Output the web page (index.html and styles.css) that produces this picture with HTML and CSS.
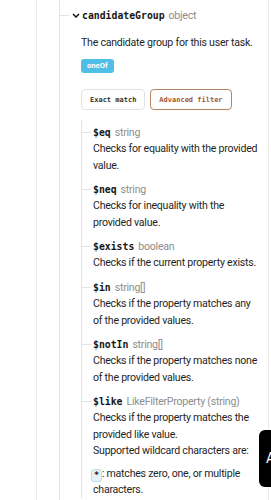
FILE: index.html
```html
<!DOCTYPE html>
<html lang="en">
<head>
<meta charset="utf-8">
<title>candidateGroup</title>
<link rel="stylesheet" href="styles.css">
</head>
<body>
<div class="outer">
  <div class="tree">
    <div class="prop">
      <div class="prop-head">
        <span class="dash"></span>
        <svg class="chev" width="8" height="5" viewBox="0 0 8 5"><path d="M1 1 L4 4 L7 1" fill="none" stroke="#161616" stroke-width="1.5"/></svg>
        <span class="name">candidateGroup</span>
        <span class="type">object</span>
      </div>
      <div class="prop-body">
        <p class="desc">The candidate group for this user task.</p>
        <span class="badge">oneOf</span>
        <div class="tabs">
          <span class="tab">Exact match</span>
          <span class="tab tab-active">Advanced filter</span>
        </div>
        <ul class="sublist">
          <li class="item">
            <div class="item-head"><span class="dash"></span><span class="name">$eq</span><span class="type">string</span></div>
            <p class="desc">Checks for equality with the provided value.</p>
          </li>
          <li class="item">
            <div class="item-head"><span class="dash"></span><span class="name">$neq</span><span class="type">string</span></div>
            <p class="desc">Checks for inequality with the provided value.</p>
          </li>
          <li class="item">
            <div class="item-head"><span class="dash"></span><span class="name">$exists</span><span class="type">boolean</span></div>
            <p class="desc">Checks if the current property exists.</p>
          </li>
          <li class="item">
            <div class="item-head"><span class="dash"></span><span class="name">$in</span><span class="type">string[]</span></div>
            <p class="desc">Checks if the property matches any of the provided values.</p>
          </li>
          <li class="item">
            <div class="item-head"><span class="dash"></span><span class="name">$notIn</span><span class="type">string[]</span></div>
            <p class="desc">Checks if the property matches none of the provided values.</p>
          </li>
          <li class="item">
            <div class="item-head"><span class="dash"></span><span class="name">$like</span><span class="type">LikeFilterProperty (string)</span></div>
            <p class="desc">Checks if the property matches the provided like value.<br>Supported wildcard characters are:</p>
            <p class="desc desc-gap"><code class="code">*</code>: matches zero, one, or multiple characters.</p>
          </li>
        </ul>
      </div>
    </div>
  </div>
</div>
<div class="float-btn">A</div>
</body>
</html>
```
FILE: styles.css
```css
* { box-sizing: border-box; }
html, body { margin: 0; padding: 0; background: #fff; }
body {
  font-family: Roboto, "Noto Sans", sans-serif;
  color: #161616;
  width: 271px;
  height: 500px;
  overflow: hidden;
}
.outer {
  margin-left: 36px;
  width: 233px;
  min-height: 500px;
  border-left: 1px solid #ececec;
  border-right: 1px solid #ececec;
  padding-left: 22px;
  padding-right: 7px;
}
.tree {
  border-left: 1px solid #e4e4e4;
  min-height: 500px;
  padding-top: 6px;
}
.prop-head {
  display: flex;
  align-items: center;
  height: 18px;
}
.dash {
  width: 9px;
  height: 1px;
  background: #e4e4e4;
  flex: none;
}
.chev { margin-left: 3px; margin-right: 2px; flex: none; }
.name {
  font-family: "DejaVu Sans Mono", monospace;
  font-weight: bold;
  font-size: 9.8px;
  color: #161616;
}
.type {
  font-size: 10.6px;
  letter-spacing: -0.25px;
  color: #8d8d8d;
  margin-left: 4px;
}
.prop-body { padding-left: 21px; }
.desc {
  margin: 0;
  font-size: 10.6px;
  letter-spacing: -0.25px;
  line-height: 16.25px;
  color: #1f1f1f;
}
.prop-body > .desc { margin-top: 11px; }
.badge {
  display: inline-block;
  margin-top: 8px;
  height: 14px;
  line-height: 14px;
  padding: 0 6px;
  background: #4fbfe6;
  color: #fff;
  font-weight: bold;
  font-size: 7.6px;
  border-radius: 3px;
  vertical-align: top;
}
.tabs {
  display: flex;
  gap: 5px;
  margin-top: 16px;
}
.tab {
  display: inline-flex;
  align-items: center;
  height: 21px;
  padding: 0 8px;
  border: 1px solid #e2e2e2;
  border-radius: 4px;
  font-family: "DejaVu Sans Mono", monospace;
  font-weight: bold;
  font-size: 7px;
  color: #333;
}
.tab-active {
  border-color: #b58461;
  color: #a0582c;
}
.sublist {
  list-style: none;
  margin: 10px 0 0 0;
  padding: 4px 0 0 0;
  border-left: 1px solid #e4e4e4;
}
.item + .item { margin-top: 7.6px; }
.item-head {
  display: flex;
  align-items: center;
  height: 17px;
}
.item-head .dash { margin-right: 2px; }
.item .desc { padding-left: 11px; }
.desc-gap { margin-top: 7px; }
.code {
  font-family: "DejaVu Sans Mono", monospace;
  font-size: 8.5px;
  font-weight: bold;
  display: inline-block;
  padding: 0 2px;
  margin-left: -2px;
  line-height: 11px;
  background: #e8f3f8;
  border: 1px solid #bcdbe8;
  border-radius: 3px;
  vertical-align: -1px;
}
.float-btn {
  position: fixed;
  left: 259px;
  top: 430px;
  width: 30px;
  height: 57px;
  background: #000;
  border-radius: 6px;
  color: #fff;
  font-family: Roboto, sans-serif;
  font-size: 14px;
  line-height: 57px;
  padding-left: 7px;
}
```
